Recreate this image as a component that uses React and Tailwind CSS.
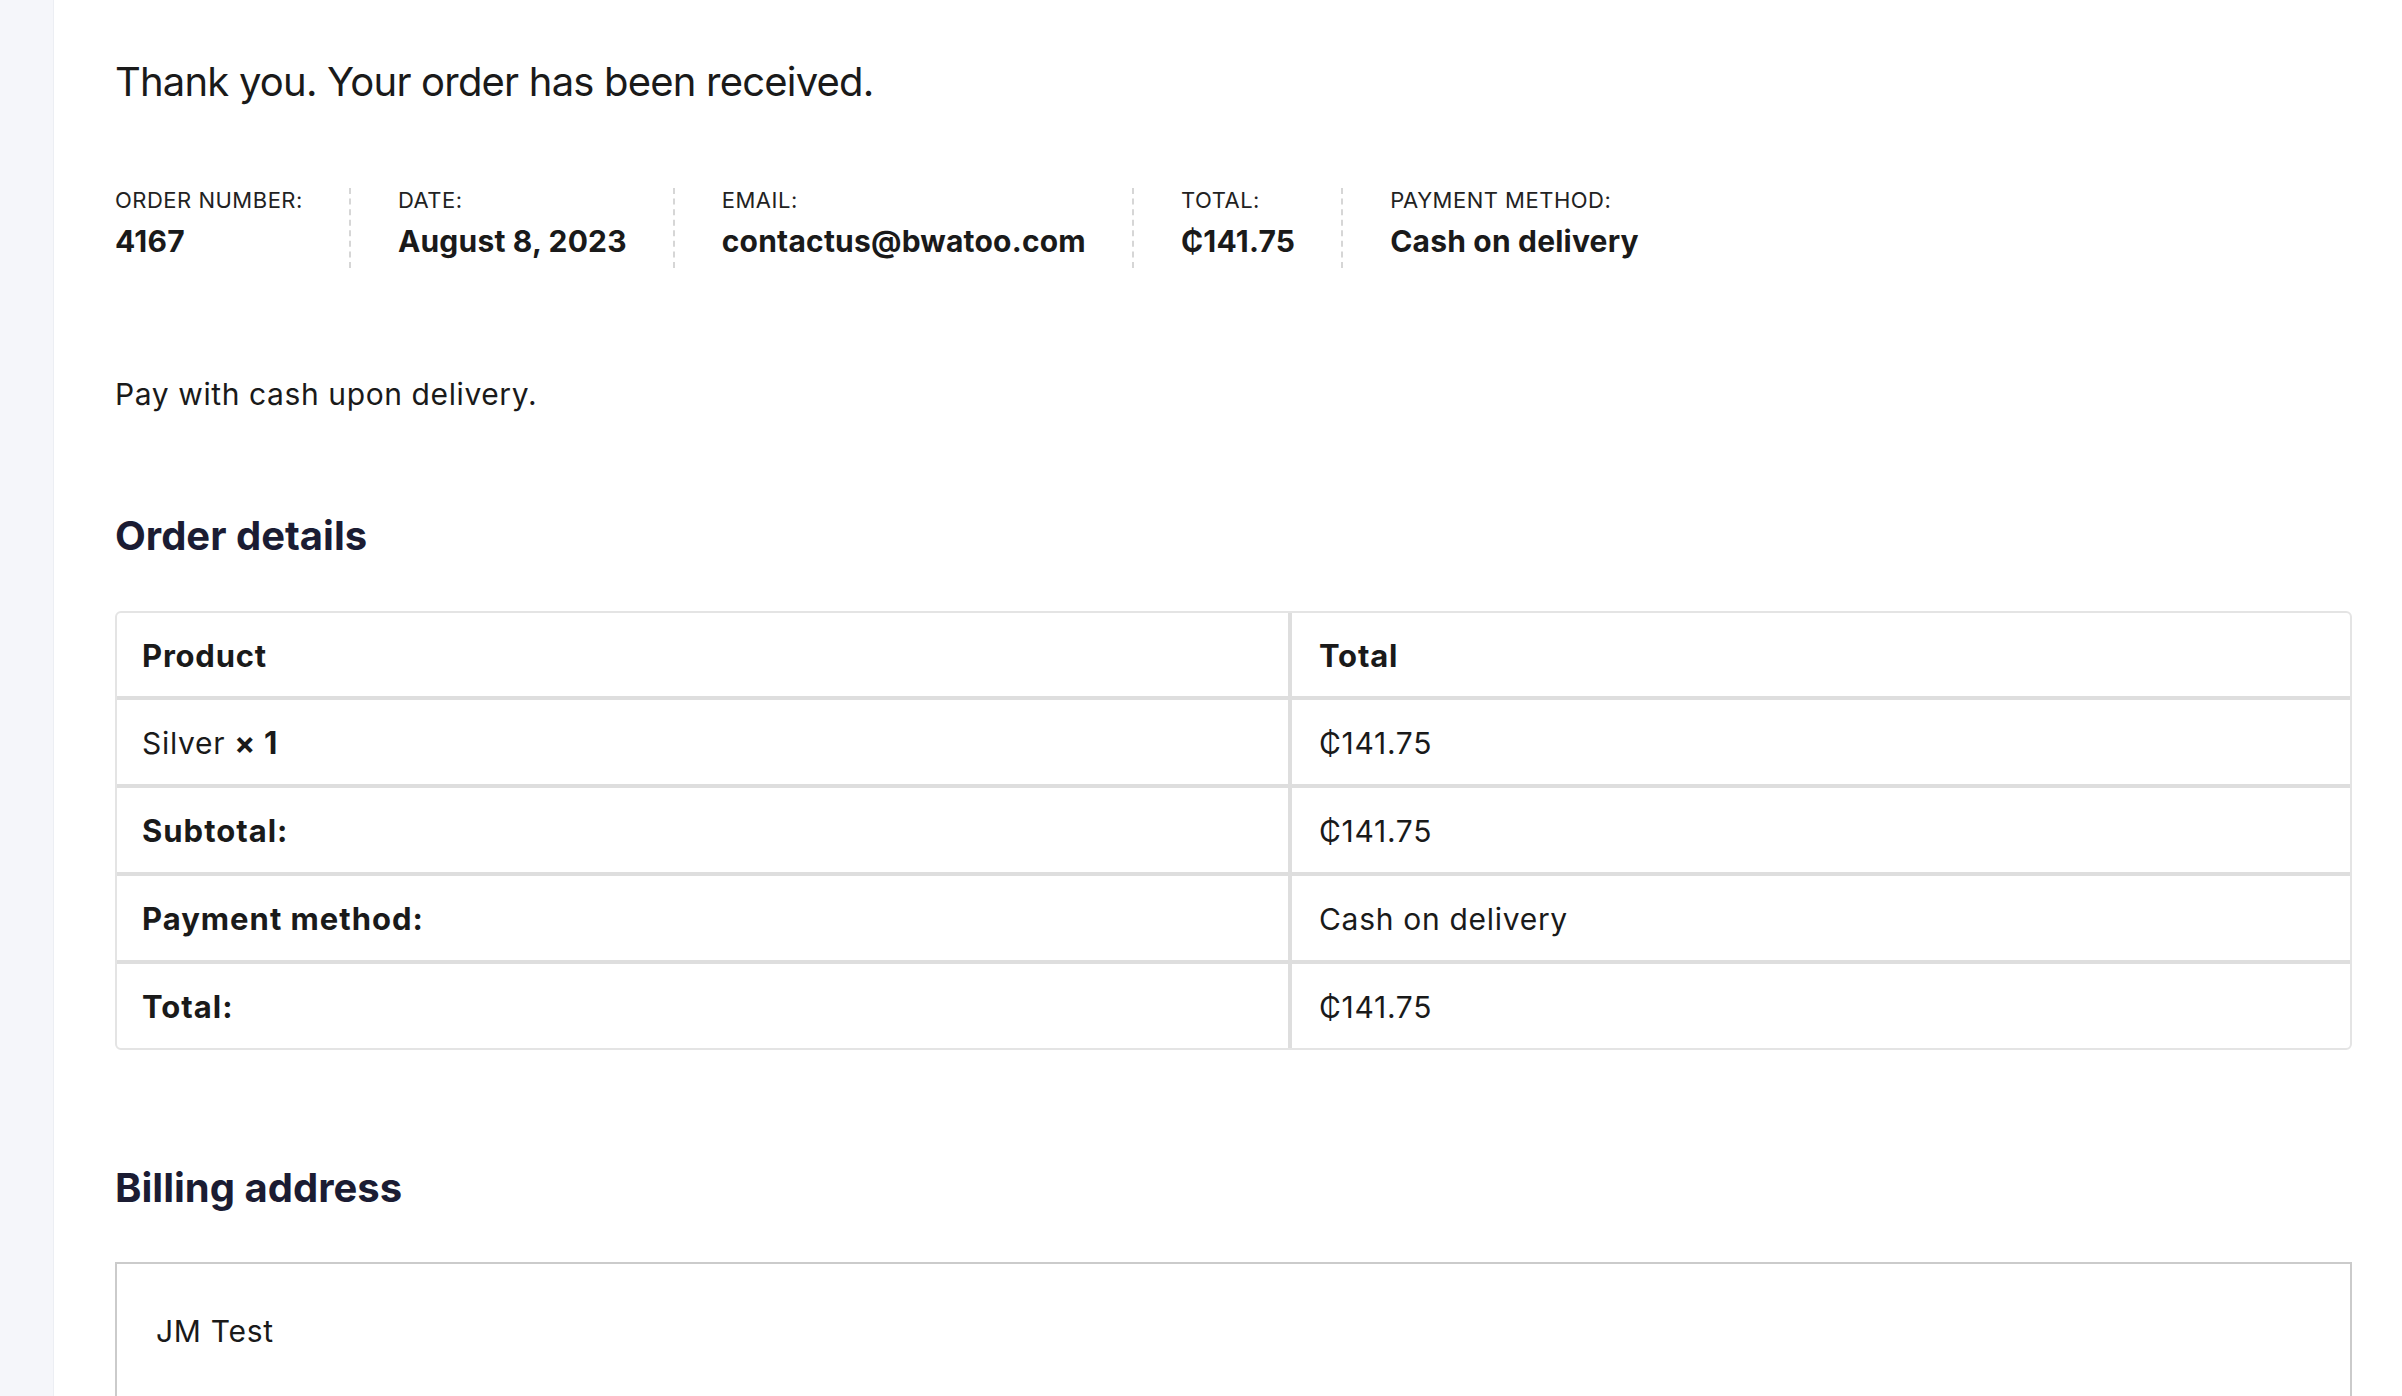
import React from 'react';

const meta = [
  { label: 'ORDER NUMBER:', value: '4167' },
  { label: 'DATE:', value: 'August 8, 2023' },
  { label: 'EMAIL:', value: 'contactus@bwatoo.com' },
  { label: 'TOTAL:', value: '₵141.75' },
  { label: 'PAYMENT METHOD:', value: 'Cash on delivery' }
];

const rows = [
  { label: 'Subtotal:', value: '₵141.75' },
  { label: 'Payment method:', value: 'Cash on delivery' },
  { label: 'Total:', value: '₵141.75' }
];

const App = () => {
  return (
    <div className="flex h-[1396px] overflow-hidden bg-white text-[#1a1a1a] font-['Inter','Noto_Sans',sans-serif]">
      {/* Sidebar strip */}
      <div className="w-[54px] shrink-0 bg-[#f5f6fa] border-r border-[#eceef3]" />

      <main className="flex-1 pl-[61px] pr-[50px]">
        <p className="pt-[52px] text-[40px] leading-[60px] tracking-[-0.8px] text-[#1a1a1a]">
          Thank you. Your order has been received.
        </p>

        {/* Order overview */}
        <ul className="mt-[76px] flex">
          {meta.map((item, i) => (
            <li
              key={item.label}
              className={`pb-[7px] ${
                i < meta.length - 1
                  ? 'pr-[46px] mr-[47px] border-r-2 border-dashed border-[#d6d6d6]'
                  : ''
              }`}
            >
              <div className="text-[22px] leading-[24px] tracking-[0.5px] text-[#222]">{item.label}</div>
              <div className="mt-[9px] text-[30px] leading-[40px] tracking-[0.2px] font-bold text-[#1a1a1a]">
                {item.value}
              </div>
            </li>
          ))}
        </ul>

        <p className="mt-[105px] text-[30px] leading-[42px] tracking-[0.6px]">Pay with cash upon delivery.</p>

        <h2 className="mt-[97px] text-[40px] leading-[48px] font-bold text-[#1b1c33]">
          Order details
        </h2>

        {/* Order details table */}
        <table className="mt-[51px] w-full border-separate border-spacing-0 border-2 border-[#e4e4e4] rounded-[6px] text-[30px] leading-[42px] tracking-[0.7px]">
          <thead>
            <tr>
              <th className="p-0 w-[1171px] text-left font-bold text-[31px] tracking-[0.8px]">
                <div className="h-[83px] flex items-center pt-[2px] pl-[25px]">Product</div>
              </th>
              <th className="p-0 text-left font-bold text-[31px] tracking-[0.8px] border-l-4 border-[#dedede]">
                <div className="h-[83px] flex items-center pt-[2px] pl-[27px]">Total</div>
              </th>
            </tr>
          </thead>
          <tbody>
            <tr>
              <td className="p-0 border-t-4 border-[#dedede]">
                <div className="h-[84px] flex items-center pt-[2px] pl-[25px]">
                  Silver&nbsp;<strong className="font-bold text-[31px]">× 1</strong>
                </div>
              </td>
              <td className="p-0 border-t-4 border-l-4 border-[#dedede]">
                <div className="h-[84px] flex items-center pt-[2px] pl-[27px]">₵141.75</div>
              </td>
            </tr>
            {rows.map((row) => (
              <tr key={row.label}>
                <th className="p-0 text-left font-bold text-[31px] tracking-[1px] border-t-4 border-[#dedede]">
                  <div className="h-[84px] flex items-center pt-[2px] pl-[25px]">{row.label}</div>
                </th>
                <td className="p-0 border-t-4 border-l-4 border-[#dedede]">
                  <div className="h-[84px] flex items-center pt-[2px] pl-[27px]">{row.value}</div>
                </td>
              </tr>
            ))}
          </tbody>
        </table>

        <h2 className="mt-[114px] text-[40px] leading-[48px] font-bold text-[#1b1c33]">
          Billing address
        </h2>

        {/* Billing address box */}
        <address className="mt-[50px] not-italic border-2 border-[#cbcbcb] pt-[46px] pl-[39px] pb-[40px] min-h-[400px] text-[30px] leading-[42px] tracking-[0.7px]">
          JM Test
        </address>
      </main>
    </div>
  );
};

export default App;
